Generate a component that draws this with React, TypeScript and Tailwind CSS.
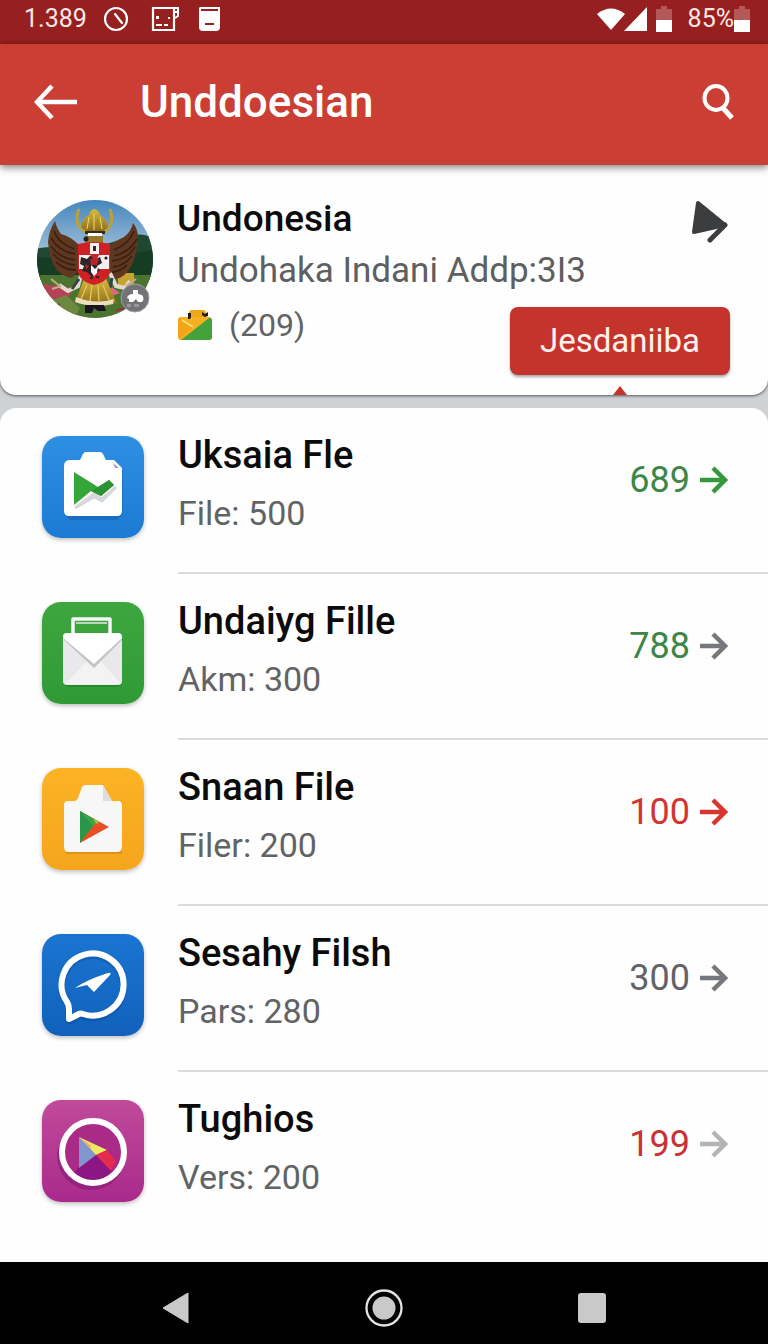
import type { ReactNode } from 'react';

type FileItem = {
  title: string;
  detail: string;
  value: string;
  valueColor: string;
  arrowColor: string;
  tile: string;
  icon: ReactNode;
};

function ClipboardIcon() {
  return (
    <svg viewBox="0 0 102 102" className="size-full" aria-hidden="true">
      <path d="M27 24h11l5-7h16l4 7h11l6 8v43l-6 6H27l-6-6V30q0-6 6-6Z" fill="#0b4f96" opacity=".35" transform="translate(1 3)" />
      <path d="M28 24h10l3-6q1-2 3-2h14q2 0 3 2l3 6h8l8 8v43q0 5-5 5H27q-5 0-5-5V30q0-6 6-6Z" fill="#fff" />
      <path d="M71 27l2 5h4Z" fill="#9aa3ad" />
      <path d="M33 72l19-14 8 5 14-12-14 14-8-4Z" fill="#d5d8da" stroke="#d5d8da" strokeWidth="3" />
      <path d="M32 36l24 15 11-7 5 5-13 11-10-5-17 14Z" fill="#36a63b" />
      <path d="M56 51l11-7 5 5-13 11-10-5Z" fill="#2c9234" />
    </svg>
  );
}

function EnvelopeIcon() {
  return (
    <svg viewBox="0 0 102 102" className="size-full" aria-hidden="true">
      <rect x="22" y="34" width="58" height="51" rx="5" fill="#176b1c" opacity=".35" />
      <path d="M31 33V17h37v16" fill="none" stroke="#f8f8f8" strokeWidth="3.5" strokeLinejoin="round" />
      <path d="M34 21h31" stroke="#bcd8bd" strokeWidth="2" />
      <rect x="21" y="31" width="59" height="52" rx="4" fill="#e9e9eb" />
      <path d="M23 82l22-23 7 6 7-6 20 23Z" fill="#f3f3f4" />
      <path d="M22 38l30 28 28-28v-3H22Z" fill="#c3c4c6" />
      <path d="M25 31h51q4 0 4 5L52 62 21 36q0-5 4-5Z" fill="#fff" />
    </svg>
  );
}

function PlayFileIcon() {
  return (
    <svg viewBox="0 0 102 102" className="size-full" aria-hidden="true">
      <path d="M26 33h9l5-14h22l9 15h9v49H24Z" fill="#a96700" opacity=".3" transform="translate(0 3)" />
      <path d="M26 33h6q3 0 4-3l4-11q1-2 4-2h17l9 16h6q4 0 4 5v41q0 5-5 5H27q-5 0-5-5V37q0-4 4-4Z" fill="#f7f7f8" />
      <path d="M61 17l9 16h-9Z" fill="#dcdddf" />
      <path d="M38 43v32l29-16Z" fill="#eb4e24" />
      <path d="M38 43v32l17-22Z" fill="#299749" />
      <path d="M38 43l17 10-4 5Z" fill="#39a646" />
      <path d="M51 50l7 4-4 2Z" fill="#b5b833" />
    </svg>
  );
}

function PlaneBubbleIcon() {
  return (
    <svg viewBox="0 0 102 102" className="size-full" aria-hidden="true">
      <path
        d="M25 68q2 3 2 7v10l10-5q2-1 4 0a31 31 0 1 0-16-12Z"
        fill="none"
        stroke="#07428c"
        strokeWidth="7"
        strokeLinejoin="round"
        opacity=".35"
        transform="translate(0 2)"
      />
      <path d="M25 68q2 3 2 7v10l10-5q2-1 4 0a31 31 0 1 0-16-12Z" fill="none" stroke="#fff" strokeWidth="6" strokeLinejoin="round" />
      <path d="M33 54q11-8 33-15 4-1 2 2L52 58l-7-7Z" fill="#fff" />
    </svg>
  );
}

function PlayCircleIcon() {
  return (
    <svg viewBox="0 0 102 102" className="size-full" aria-hidden="true">
      <circle cx="49" cy="56" r="34" fill="#70106a" opacity=".4" />
      <circle cx="51" cy="52" r="31" fill="#a92b87" />
      <path d="M37 67l17-12 16 16q-9 10-19 11-12-1-19-9Z" fill="#8c1683" />
      <path d="M37 37v31l17-13Z" fill="#7f97cc" />
      <path d="M37 37l17 18 11-5Z" fill="#edeb62" />
      <path d="M37 37l11 8 1 4Z" fill="#f4a080" />
      <path d="M54 55l11-5 9 11-5 10Z" fill="#e52b4f" />
      <circle cx="51" cy="52" r="31" fill="none" stroke="#fff" strokeWidth="6" />
    </svg>
  );
}

const items: FileItem[] = [
  {
    title: 'Uksaia Fle',
    detail: 'File: 500',
    value: '689',
    valueColor: 'text-[#3c8648]',
    arrowColor: 'text-[#35983d]',
    tile: 'from-[#2d8fe2] to-[#1c7ad4]',
    icon: <ClipboardIcon />,
  },
  {
    title: 'Undaiyg Fille',
    detail: 'Akm: 300',
    value: '788',
    valueColor: 'text-[#3c8648]',
    arrowColor: 'text-[#74777c]',
    tile: 'from-[#3ea63f] to-[#2f9a35]',
    icon: <EnvelopeIcon />,
  },
  {
    title: 'Snaan File',
    detail: 'Filer: 200',
    value: '100',
    valueColor: 'text-[#d3342f]',
    arrowColor: 'text-[#d8352f]',
    tile: 'from-[#fbb325] to-[#f5a51c]',
    icon: <PlayFileIcon />,
  },
  {
    title: 'Sesahy Filsh',
    detail: 'Pars: 280',
    value: '300',
    valueColor: 'text-[#626366]',
    arrowColor: 'text-[#74777c]',
    tile: 'from-[#1a75d1] to-[#1161bb]',
    icon: <PlaneBubbleIcon />,
  },
  {
    title: 'Tughios',
    detail: 'Vers: 200',
    value: '199',
    valueColor: 'text-[#cb3034]',
    arrowColor: 'text-[#b4b4b6]',
    tile: 'from-[#c04a9a] to-[#a9298b]',
    icon: <PlayCircleIcon />,
  },
];

function BatteryIcon() {
  return (
    <svg viewBox="0 0 16 26" className="h-[26px] w-4" aria-hidden="true">
      <path d="M5 0h6v3h5v11H0V3h5Z" fill="#b5585a" />
      <path d="M0 14h16v12H0Z" fill="#fff" />
    </svg>
  );
}

function StatusBar() {
  return (
    <div className="flex h-11 items-center bg-[#96201f] pr-[18px] pb-1.5 pl-6 text-white">
      <span className="w-20 text-[25px] leading-8 text-[#fde6e4]">1.389</span>
      <svg viewBox="0 0 118 26" className="h-[26px] w-[118px]" aria-hidden="true">
        <circle cx="12" cy="13" r="11" fill="none" stroke="#fff" strokeWidth="2.2" />
        <path d="M11 8l7 9" stroke="#fff" strokeWidth="2.2" strokeLinecap="round" />
        <path d="M49 2h21v22H49Z" fill="none" stroke="#fff" strokeWidth="2.2" />
        <path d="M70 2h4v8l-3 2M70 6h4" fill="none" stroke="#fff" strokeWidth="2" />
        <path d="M52 10h3v3h-3zM64 11h2v2h-2zM52 18h6v2h-6zM60 18h4v2h-4z" fill="#fff" />
        <path d="M96 1h20v20q0 4-4 4h-13q-4 0-4-4V2Z" fill="#fff" />
        <path d="M97 4h17M101 18h9" stroke="#96201f" strokeWidth="2" />
      </svg>
      <div className="ml-auto flex items-center">
        <svg viewBox="0 0 51 24" className="h-6 w-[51px]" aria-hidden="true">
          <path d="M0 7q14-11 28 0L14 23Z" fill="#fff" />
          <path d="M50 0v24H27Z" fill="#fff" />
        </svg>
        <span className="ml-2">
          <BatteryIcon />
        </span>
        <span className="ml-4 text-[25px] leading-8 text-[#fde6e4]">85%</span>
        <BatteryIcon />
      </div>
    </div>
  );
}

function AppBar() {
  return (
    <header className="relative z-10 flex h-[121px] items-center bg-[#cb3e34] pr-8 pb-1.5 pl-[34px] text-white shadow-[0_2px_8px_rgba(0,0,0,0.55)]">
      <button type="button" aria-label="Back" className="w-[106px]">
        <svg viewBox="0 0 44 38" className="h-[38px] w-11" fill="none" stroke="currentColor" strokeWidth="4.5" aria-hidden="true">
          <path d="M18 3L3 19l15 16M3 19h40" />
        </svg>
      </button>
      <h1 className="text-[44px] leading-[52px] font-medium">Unddoesian</h1>
      <button type="button" aria-label="Search" className="ml-auto">
        <svg viewBox="0 0 34 38" className="h-[38px] w-[34px]" fill="none" stroke="currentColor" aria-hidden="true">
          <ellipse cx="14" cy="15" rx="11.5" ry="12" strokeWidth="4" />
          <path d="M21 25l9 10" strokeWidth="5" />
        </svg>
      </button>
    </header>
  );
}

function Avatar() {
  return (
    <svg viewBox="0 0 118 120" className="h-[120px] w-[118px] shrink-0" role="img" aria-label="Garuda emblem">
      <defs>
        <clipPath id="avatar-clip">
          <ellipse cx="59" cy="60" rx="58" ry="59" />
        </clipPath>
        <linearGradient id="avatar-sky" x1="0" y1="0" x2="0" y2="1">
          <stop offset="0" stopColor="#4385bd" />
          <stop offset="1" stopColor="#a9c4d9" />
        </linearGradient>
        <linearGradient id="avatar-gold" x1="0" y1="0" x2="0" y2="1">
          <stop offset="0" stopColor="#d9b93c" />
          <stop offset="1" stopColor="#8b6b16" />
        </linearGradient>
      </defs>
      <g clipPath="url(#avatar-clip)">
        <rect width="118" height="58" fill="url(#avatar-sky)" />
        <path d="M0 50q12-4 40 0 34-4 50-12 16-6 28 2v50H0Z" fill="#1f4832" />
        <path d="M0 58l30 2 60-5 28-4v30H0Z" fill="#163c23" />
        <rect y="76" width="118" height="44" fill="#4a7430" />
        <path d="M0 84l38 5-6 10-32 2Z" fill="#b54255" />
        <path d="M82 74h16v16H82Z" fill="#c6a332" />
        <path d="M70 84l14 10-8 3Z" fill="#e0648b" />
        <path d="M8 104l22-8 14 13-6 11Z" fill="#6d8840" />
        <path d="M12 110l12-5M80 112l16-6" stroke="#8c3740" strokeWidth="2" />

        {/* wings */}
        <path d="M19 22q-6 9-7 21 1 16 8 27 7 8 16 9l7-8V46q-9-9-18-11-4-5-6-13Z" fill="#60381f" />
        <path d="M97 24q7 8 4 22-2 15-7 23-5 9-14 11l-7-6V48q9-8 15-10 7-5 9-14Z" fill="#60381f" />
        <path
          d="M18 32q4 12 20 18M15 39q7 13 24 16M15 47q8 12 24 14M17 55q9 10 22 11M20 63q8 8 20 8M98 32q-5 13-20 19M101 40q-7 13-23 17M99 48q-7 12-23 14M96 57q-8 10-19 11M91 66q-7 7-15 7"
          fill="none"
          stroke="#3b2114"
          strokeWidth="1.8"
        />

        {/* crown */}
        <path d="M43 10q-6 15 5 22 12 6 22 0 9-8 4-22" fill="none" stroke="#bba13b" strokeWidth="3" />
        <path d="M45 28q2-10 8-12 1-5 5-6 5 1 6 6 6 3 8 12-3 5-13 5t-14-5Z" fill="url(#avatar-gold)" />
        <path d="M53 18l-2 12M58 14v17M64 18l2 12" stroke="#ead979" strokeWidth="1" />
        <path d="M49 32h20v3H49Z" fill="#3a2c14" />
        <path d="M52 34h14v3H52Z" fill="#fff" />
        <path d="M49 37h18v8H49Z" fill="#977829" />
        <circle cx="50" cy="40" r="2.5" fill="#222" />

        {/* arms */}
        <path d="M46 73l-4 14-10 5-9-6M74 74l6 13 9 2 5-7" fill="none" stroke="#dedbd1" strokeWidth="4" />
        <path d="M43 80l-7 10M76 79l-2 10" stroke="#39414b" strokeWidth="3" />
        <path d="M25 88l-10-8M25 87l-9 3M90 87l10-7M90 88l11 1" stroke="#caa788" strokeWidth="2" />

        {/* skirt */}
        <path d="M48 80h22l11 24q-19 6-41-3Z" fill="url(#avatar-gold)" />
        <path d="M51 86l-6 14M56 86l-2 16M62 86l1 16M67 86l6 15" stroke="#e0c461" strokeWidth="1.4" />
        <path d="M40 98q20 8 38 2l-1 5q-19 5-38-2Z" fill="#ecdfbc" />
        <path d="M49 106h19l2 6h-8l-4-3-2 5h-7Z" fill="#18161e" />

        {/* shield */}
        <path d="M42 45q16-4 32 0v29q-3 9-16 12-13-3-16-12Z" fill="#cf2026" />
        <path d="M54 44h9v11h-9ZM43 56h12l4 7 4-7h10v14H62l-4 4-5-4H43Z" fill="#f4f0ed" />
        <path d="M45 58l6 2 4-4 3 5 6-3 2 6-5 3 3 5-5 2-3 4-5-5-5-1 2-5-4-2Z" fill="#2d2528" />
        <path d="M54 60h9l-2 6h-6ZM49 65l4 2-3 4Z" fill="#b72429" />
        <path d="M55 66l4 4 3-3-1 7-3 3-3-4Z" fill="#fff" />
        <path d="M54 78h3v2h-3ZM60 77h3v2h-3ZM57 47h3v5h-3Z" fill="#3d2024" />
        <circle cx="70" cy="59" r="1.6" fill="#222" />
      </g>
      <circle cx="99" cy="99" r="14" fill="#737377" stroke="#a0a1a4" strokeWidth="1" />
      <path d="M97 91h5v4l4 1q3 4 0 7h-4l-2-3-3 3h-4v-3l-2-1q1-4 6-4Z" fill="#fff" />
      <path d="M91 105h4v3h-4ZM98 105h5v3h-5Z" fill="#98989c" />
    </svg>
  );
}

function BagIcon() {
  return (
    <svg viewBox="0 0 36 32" className="h-8 w-9" aria-hidden="true">
      <path d="M12 9V4q0-3 3-3h11q3 0 3 3v5Z" fill="#eda91d" />
      <rect x="1" y="8" width="34" height="23" rx="3" fill="#f4b01f" />
      <path d="M2 9l15 9L3 30q-2-1-2-4V11Z" fill="#f3a51a" />
      <path d="M5 11l11 7" stroke="#ffdc79" strokeWidth="2" />
      <path d="M32 9q3 0 3 3v16q0 3-3 3H4Z" fill="#45a23a" />
      <path d="M11 4h3v4l-1 2h-2ZM25 3l3 2 3-2v4l-3 1-3-2Z" fill="#251b12" />
    </svg>
  );
}

function ProfileCard() {
  return (
    <section className="relative flex min-h-[230px] gap-[23px] rounded-b-2xl bg-[#fdfefd] pt-[34px] pr-[38px] pl-9 shadow-[0_1px_3px_rgba(0,0,0,0.6)]">
      <Avatar />
      <div className="min-w-0 grow">
        <div className="flex items-start justify-between">
          <h2 className="text-[37px] leading-10 font-medium text-[#0b0b0b]">Undonesia</h2>
          <svg viewBox="0 0 40 44" className="h-11 w-10 text-[#3b3d3e]" aria-hidden="true">
            <path d="M8 4l27 22-31 7Z" fill="currentColor" stroke="currentColor" strokeWidth="4" strokeLinejoin="round" />
            <path d="M35 26L20 41" stroke="currentColor" strokeWidth="5" strokeLinecap="round" />
          </svg>
        </div>
        <p className="mt-1.5 text-[35px] leading-11 whitespace-nowrap text-[#5e5f61]">Undohaka Indani Addp:3I3</p>
        <div className="flex items-start justify-between">
          <p className="flex items-center gap-4 pt-3 text-[32px] leading-10 text-[#626365]">
            <BagIcon />
            (209)
          </p>
          <button type="button" className="mt-3.5 h-[68px] w-[220px] rounded-lg bg-[#c5342c] text-[33px] text-[#fff0ec] shadow-[0_2px_3px_rgba(0,0,0,0.35)]">
            Jesdaniiba
          </button>
        </div>
      </div>
      <svg viewBox="0 0 14 9" className="absolute right-[141px] bottom-0 h-[9px] w-3.5" aria-hidden="true">
        <path d="M7 0l7 9H0Z" fill="#c5342c" />
      </svg>
    </section>
  );
}

function ArrowIcon({ className }: { className: string }) {
  return (
    <svg viewBox="0 0 28 28" className={`size-7 ${className}`} fill="none" stroke="currentColor" strokeWidth="4.5" aria-hidden="true">
      <path d="M0 14h24M13 2l12 12-12 12" />
    </svg>
  );
}

function FileRow({ item, last }: { item: FileItem; last: boolean }) {
  return (
    <li>
      <a href="#" className="flex h-[166px] gap-[34px] pl-[42px]">
        <span className={`mt-7 size-[102px] shrink-0 rounded-[19px] bg-linear-to-b shadow-[0_2px_4px_rgba(0,0,0,0.25)] ${item.tile}`}>
          {item.icon}
        </span>
        <span className={`flex grow justify-between border-[#dadbde] pr-10 ${last ? '' : 'border-b-2'}`}>
          <span className="flex flex-col gap-3.5 pt-[25px]">
            <span className="text-[38px] leading-11 font-medium text-[#0b0b0b]">{item.title}</span>
            <span className="text-[34px] leading-11 text-[#626365]">{item.detail}</span>
          </span>
          <span className="flex items-center gap-2.5 self-start pt-[50px]">
            <span className={`text-[36px] leading-11 ${item.valueColor}`}>{item.value}</span>
            <ArrowIcon className={item.arrowColor} />
          </span>
        </span>
      </a>
    </li>
  );
}

function NavBar() {
  return (
    <nav className="flex h-[82px] items-center justify-between bg-black px-[162px] pt-2.5 text-[#c9c9ca]">
      <button type="button" aria-label="Back">
        <svg viewBox="0 0 28 32" className="h-8 w-7" aria-hidden="true">
          <path d="M1 16L26 1v30Z" fill="currentColor" stroke="currentColor" strokeLinejoin="round" />
        </svg>
      </button>
      <button type="button" aria-label="Home">
        <svg viewBox="0 0 38 38" className="size-[38px]" aria-hidden="true">
          <circle cx="19" cy="19" r="17.5" fill="none" stroke="#e3e3e3" strokeWidth="2.3" />
          <circle cx="19" cy="19" r="11.5" fill="currentColor" />
        </svg>
      </button>
      <button type="button" aria-label="Recent apps">
        <svg viewBox="0 0 28 30" className="h-[30px] w-7" aria-hidden="true">
          <rect width="28" height="30" rx="3" fill="currentColor" />
        </svg>
      </button>
    </nav>
  );
}

export default function App() {
  return (
    <div className="flex min-h-screen flex-col bg-[#cfd2d5] font-[Roboto,sans-serif]">
      <StatusBar />
      <AppBar />
      <main className="flex grow flex-col gap-[13px]">
        <ProfileCard />
        <ul className="grow rounded-t-2xl bg-[#fdfefd]">
          {items.map((item, i) => (
            <FileRow key={item.title} item={item} last={i === items.length - 1} />
          ))}
        </ul>
      </main>
      <NavBar />
    </div>
  );
}
